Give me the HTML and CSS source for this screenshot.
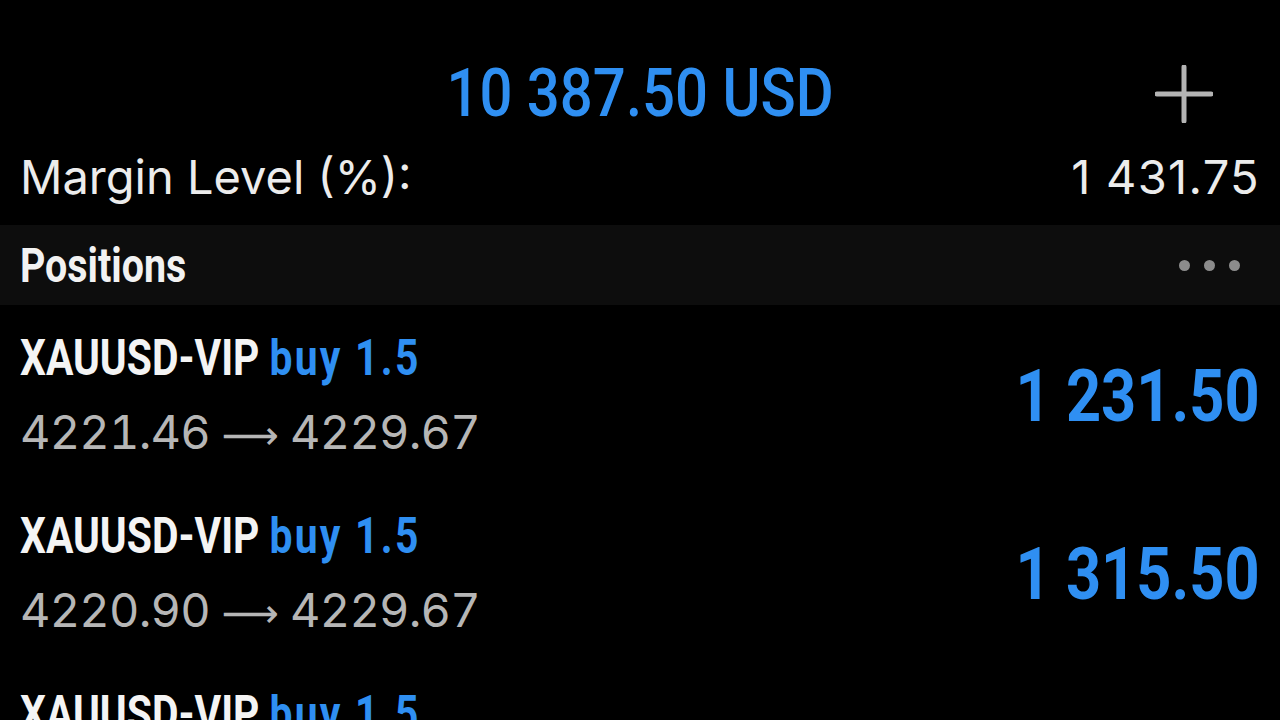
FILE: index.html
```html
<!DOCTYPE html>
<html lang="en">
<head>
    <meta charset="utf-8">
    <title>Trade</title>
    <link rel="stylesheet" href="styles.css">
</head>
<body>
<div class="screen">
    <div class="balance">
        <div></div>
        <div class="balance-value"><span class="narrow">10 387.50 USD</span></div>
        <div class="add">
            <svg width="58" height="58" viewBox="0 0 58 58">
                <path d="M29 2 V56 M2 29 H56" stroke="#b4b4b4" stroke-width="5" stroke-linecap="round" fill="none"/>
            </svg>
        </div>
    </div>

    <div class="stat">
        <span>Margin Level (%):</span>
        <span class="num">1 431.75</span>
    </div>

    <div class="section">
        <span class="section-title narrow">Positions</span>
        <span class="dots"><i></i><i></i><i></i></span>
    </div>

    <div class="pos">
        <div class="pos-info">
            <div class="pos-name"><span class="narrow">XAUUSD-VIP <span class="buy">buy 1.5</span></span></div>
            <div class="pos-price">4221.46 <span class="arrow">&#x27F6;</span> 4229.67</div>
        </div>
        <div class="pos-profit"><span class="narrow">1 231.50</span></div>
    </div>
    <div class="pos">
        <div class="pos-info">
            <div class="pos-name"><span class="narrow">XAUUSD-VIP <span class="buy">buy 1.5</span></span></div>
            <div class="pos-price">4220.90 <span class="arrow">&#x27F6;</span> 4229.67</div>
        </div>
        <div class="pos-profit"><span class="narrow">1 315.50</span></div>
    </div>
    <div class="pos">
        <div class="pos-info">
            <div class="pos-name"><span class="narrow">XAUUSD-VIP <span class="buy">buy 1.5</span></span></div>
            <div class="pos-price">4220.90 <span class="arrow">&#x27F6;</span> 4229.67</div>
        </div>
        <div class="pos-profit"><span class="narrow">1 315.50</span></div>
    </div>
</div>
</body>
</html>
```

FILE: styles.css
```css
body { margin: 0; background: #000; color: #ececec; font-family: Inter, "Open Sans", sans-serif; overflow: hidden; }
.screen { width: 1280px; height: 720px; overflow: hidden; }

/* no condensed face installed, so squeeze Roboto */
.narrow { display: inline-block; font-family: Roboto, "Liberation Sans", sans-serif; font-weight: bold; transform: scaleX(0.84); transform-origin: left center; white-space: nowrap; }
.num { letter-spacing: 1.3px; }

.balance { display: grid; grid-template-columns: 1fr auto 1fr; align-items: center; height: 150px; padding: 0 20px; }
.balance-value { font-size: 66px; color: #2f8ff2; padding-top: 34px; }
.balance-value .narrow { transform: scaleX(0.88); transform-origin: center; font-weight: 500; }
.add { justify-self: end; padding-right: 47px; padding-top: 38px; }
.add svg { display: block; }

.stat { display: flex; justify-content: space-between; align-items: center; padding: 0 20px; height: 65px; font-size: 47px; margin-top: -6px; margin-bottom: 16px; }

.section { display: flex; justify-content: space-between; align-items: center; background: #0d0d0d; height: 80px; padding: 0 20px; }
.section-title { font-size: 48px; color: #f2f2f2; transform: scaleX(0.82); }
.dots { display: flex; gap: 14px; padding-right: 20px; }
.dots i { width: 11px; height: 11px; border-radius: 50%; background: #8c8c8c; }

.pos { display: flex; justify-content: space-between; align-items: center; height: 178px; padding: 0 20px; }
.pos-info { padding-top: 4px; }
.pos-name { font-size: 50px; color: #f4f4f4; line-height: 60px; }
.pos-name .narrow { transform: scaleX(0.816); }
.buy { color: #2f8ff2; letter-spacing: 2.8px; }
.pos-price { font-size: 47px; color: #b6b6b6; line-height: 62px; margin-top: 13px; white-space: nowrap; font-variant-numeric: tabular-nums; letter-spacing: -0.8px; }
.arrow { font-family: "DejaVu Sans", sans-serif; font-size: 40px; }
.pos-profit { font-size: 73px; color: #2f8ff2; }
.pos-profit .narrow { transform-origin: right center; }
```
